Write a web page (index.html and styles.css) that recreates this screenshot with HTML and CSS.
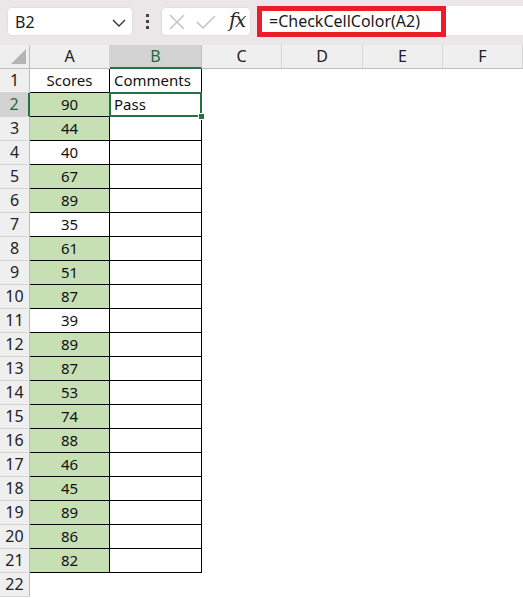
FILE: index.html
```html
<!DOCTYPE html>
<html>
<head>
<meta charset="utf-8">
<link rel="stylesheet" href="styles.css">
</head>
<body>
<div class="toolbar">
  <div class="namebox">
    <span class="nb-text">B2</span>
    <svg class="chev" width="14" height="8" viewBox="0 0 14 8"><path d="M1 1 L7 7 L13 1" fill="none" stroke="#333" stroke-width="1.4"/></svg>
  </div>
  <div class="dots"><span></span><span></span><span></span></div>
  <div class="fxbox">
    <svg width="18" height="18" viewBox="0 0 18 18" class="ic-x"><path d="M2 2 L16 16 M16 2 L2 16" stroke="#c4c4c4" stroke-width="1.5" fill="none"/></svg>
    <svg width="20" height="16" viewBox="0 0 20 16" class="ic-check"><path d="M1 8 L7 14 L19 2" stroke="#c4c4c4" stroke-width="1.5" fill="none"/></svg>
    <span class="fx">fx</span>
  </div>
  <div class="formula">
    <div class="redbox">=CheckCellColor(A2)</div>
    <div class="fill"></div>
  </div>
</div>
<div class="grid">
  <div class="corner"><span class="tri"></span></div>
  <div class="ch">A</div>
  <div class="ch sel">B</div>
  <div class="ch">C</div>
  <div class="ch">D</div>
  <div class="ch">E</div>
  <div class="ch">F</div>

  <div class="rh">1</div><div class="c t num">Scores</div><div class="c t txt">Comments</div><div class="c"></div><div class="c"></div><div class="c"></div><div class="c"></div>
  <div class="rh sel">2</div><div class="c t num green">90</div><div class="c t txt selcell">Pass<span class="selbox"></span><span class="handle"></span></div><div class="c"></div><div class="c"></div><div class="c"></div><div class="c"></div>
  <div class="rh">3</div><div class="c t num green">44</div><div class="c t"></div><div class="c"></div><div class="c"></div><div class="c"></div><div class="c"></div>
  <div class="rh">4</div><div class="c t num">40</div><div class="c t"></div><div class="c"></div><div class="c"></div><div class="c"></div><div class="c"></div>
  <div class="rh">5</div><div class="c t num green">67</div><div class="c t"></div><div class="c"></div><div class="c"></div><div class="c"></div><div class="c"></div>
  <div class="rh">6</div><div class="c t num green">89</div><div class="c t"></div><div class="c"></div><div class="c"></div><div class="c"></div><div class="c"></div>
  <div class="rh">7</div><div class="c t num">35</div><div class="c t"></div><div class="c"></div><div class="c"></div><div class="c"></div><div class="c"></div>
  <div class="rh">8</div><div class="c t num green">61</div><div class="c t"></div><div class="c"></div><div class="c"></div><div class="c"></div><div class="c"></div>
  <div class="rh">9</div><div class="c t num green">51</div><div class="c t"></div><div class="c"></div><div class="c"></div><div class="c"></div><div class="c"></div>
  <div class="rh">10</div><div class="c t num green">87</div><div class="c t"></div><div class="c"></div><div class="c"></div><div class="c"></div><div class="c"></div>
  <div class="rh">11</div><div class="c t num">39</div><div class="c t"></div><div class="c"></div><div class="c"></div><div class="c"></div><div class="c"></div>
  <div class="rh">12</div><div class="c t num green">89</div><div class="c t"></div><div class="c"></div><div class="c"></div><div class="c"></div><div class="c"></div>
  <div class="rh">13</div><div class="c t num green">87</div><div class="c t"></div><div class="c"></div><div class="c"></div><div class="c"></div><div class="c"></div>
  <div class="rh">14</div><div class="c t num green">53</div><div class="c t"></div><div class="c"></div><div class="c"></div><div class="c"></div><div class="c"></div>
  <div class="rh">15</div><div class="c t num green">74</div><div class="c t"></div><div class="c"></div><div class="c"></div><div class="c"></div><div class="c"></div>
  <div class="rh">16</div><div class="c t num green">88</div><div class="c t"></div><div class="c"></div><div class="c"></div><div class="c"></div><div class="c"></div>
  <div class="rh">17</div><div class="c t num green">46</div><div class="c t"></div><div class="c"></div><div class="c"></div><div class="c"></div><div class="c"></div>
  <div class="rh">18</div><div class="c t num green">45</div><div class="c t"></div><div class="c"></div><div class="c"></div><div class="c"></div><div class="c"></div>
  <div class="rh">19</div><div class="c t num green">89</div><div class="c t"></div><div class="c"></div><div class="c"></div><div class="c"></div><div class="c"></div>
  <div class="rh">20</div><div class="c t num green">86</div><div class="c t"></div><div class="c"></div><div class="c"></div><div class="c"></div><div class="c"></div>
  <div class="rh">21</div><div class="c t num green">82</div><div class="c t"></div><div class="c"></div><div class="c"></div><div class="c"></div><div class="c"></div>
  <div class="rh">22</div><div class="c"></div><div class="c"></div><div class="c"></div><div class="c"></div><div class="c"></div><div class="c"></div>
</div>
</body>
</html>
```
FILE: styles.css
```css
html, body { margin: 0; padding: 0; background: #fff; }
body { width: 523px; height: 598px; overflow: hidden; font-family: "Noto Sans", "Open Sans", sans-serif; }
.toolbar {
  height: 45px; box-sizing: border-box; background: #ebe7e9;
  display: flex; align-items: flex-start; padding: 7px 0 0 7px;
}
.namebox {
  width: 126px; height: 29px; box-sizing: border-box; background: #fff;
  border-radius: 5px; border: 1px solid #e2dfe0;
  display: flex; align-items: center; justify-content: space-between; padding: 0 6px 0 7px;
}
.nb-text { font-family: "Noto Sans", sans-serif; font-size: 16px; color: #1a1a1a; }
.chev { margin-top: 2px; }
.dots { width: 28px; height: 29px; display: flex; flex-direction: column; align-items: center; justify-content: center; gap: 3px; }
.dots span { width: 3px; height: 3px; background: #444; display: block; }
.fxbox {
  width: 90px; height: 29px; box-sizing: border-box; background: #fff; border: 1px solid #e2dfe0;
  border-radius: 5px; display: flex; align-items: center; padding-left: 6px;
}
.ic-x { margin-right: 10px; }
.ic-check { margin-right: 13px; }
.fx { font-family: "DejaVu Serif", "Liberation Serif", serif; font-style: italic; font-size: 20px; color: #2a2a2a; letter-spacing: -1.5px; margin-top: -4px; }
.formula { margin-left: 6px; margin-top: -1px; flex: 1; display: flex; align-items: flex-start; }
.redbox {
  width: 189px; height: 31px; box-sizing: border-box; border: 5px solid #ec1c2a; background: #fff;
  font-family: "Noto Sans", sans-serif; font-size: 16px; color: #1a1a1a; line-height: 20px; padding-left: 7px;
}
.fill { flex: 1; height: 29px; background: #fff; }
.grid { display: grid; grid-template-columns: 30px 80px 92px 80px 81px 80px 80px; grid-auto-rows: 24px; }
.corner { background: #efefef; border-right: 1px solid #bdbdbd; border-bottom: 1px solid #bdbdbd; box-sizing: border-box; position: relative; }
.tri { position: absolute; right: 3px; bottom: 4px; width: 0; height: 0; border-left: 15px solid transparent; border-bottom: 15px solid #b4b4b4; }
.ch {
  background: #efefef; border-right: 1px solid #d6d6d6; border-bottom: 1px solid #bdbdbd; box-sizing: border-box;
  text-align: center; font-size: 16px; line-height: 23px; color: #222;
}
.ch.sel { background: #d3d3d3; color: #1e6b41; border-bottom: 2px solid #217346; border-right-color: #bdbdbd; }
.rh {
  background: #efefef; border-right: 1px solid #bdbdbd; border-bottom: 1px solid #d6d6d6; box-sizing: border-box;
  text-align: center; font-size: 16px; line-height: 23px; color: #222;
}
.rh.sel { background: #d3d3d3; color: #1e6b41; border-right: 2px solid #217346; }
.c { box-sizing: border-box; font-size: 15px; line-height: 23px; color: #111; }
.t { border-right: 1px solid #000; border-bottom: 1px solid #000; }
.num { text-align: center; }
.green { background: #c6e0b4; }
.txt { padding-left: 4px; }
.selcell { position: relative; }
.selbox { position: absolute; left: -1px; top: -1px; right: -1px; bottom: -1px; border: 2px solid #217346; }
.handle { position: absolute; right: -4px; bottom: -4px; width: 5px; height: 5px; background: #217346; border: 1px solid #fff; }
```
